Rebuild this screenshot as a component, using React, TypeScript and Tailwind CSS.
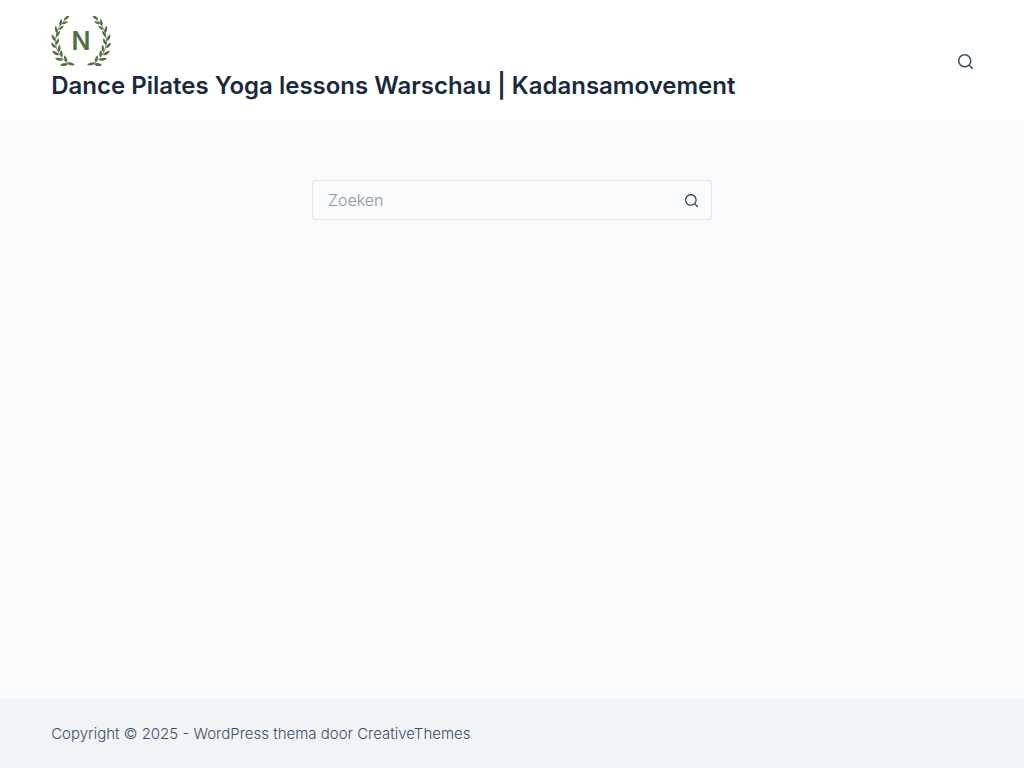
const LEAF = 'M0 0C1.400 -2 4.800 -2.500 8.200 -0.600C5.400 1.500 2 1.600 0 0Z'

// position on the stem, direction in degrees, scale
const LEAVES = [
    { x: 13, y: 4, r: -36, s: 0.9 },
    { x: 11, y: 8, r: -20, s: 0.8 },
    { x: 9, y: 10, r: -74, s: 0.9 },
    { x: 8, y: 14, r: -38, s: 0.8 },
    { x: 6, y: 17, r: -98, s: 0.9 },
    { x: 5, y: 21, r: -52, s: 0.9 },
    { x: 4, y: 25, r: -112, s: 0.9 },
    { x: 5, y: 29, r: -62, s: 0.9 },
    { x: 5, y: 32, r: -130, s: 0.9 },
    { x: 8, y: 36, r: -82, s: 0.9 },
    { x: 8, y: 39, r: -146, s: 1 },
    { x: 11, y: 41, r: -94, s: 0.9 },
    { x: 12, y: 44, r: -164, s: 1 },
    { x: 16, y: 46, r: -108, s: 0.9 },
    { x: 17, y: 48, r: -184, s: 1 },
    { x: 16, y: 47, r: 18, s: 1 },
]

function Branch() {
    return (
        <>
            <path
                d="M15 3C8 9 5 17 4.500 25C4.500 34 10 43 18 48"
                fill="none"
                stroke="currentColor"
                strokeWidth="0.8"
            />
            {LEAVES.map(({ x, y, r, s }) => (
                <path key={`${x}-${y}`} d={LEAF} transform={`translate(${x} ${y}) rotate(${r}) scale(${s})`} />
            ))}
        </>
    )
}

function Logo() {
    return (
        <svg viewBox="0 0 60 50" className="h-[50px] w-[60px] text-[#4f6f43]" fill="currentColor" aria-hidden="true">
            <Branch />
            <g transform="translate(60 0) scale(-1 1)">
                <Branch />
            </g>
            <text x="30" y="34" textAnchor="middle" className="text-[25px] font-semibold">
                N
            </text>
        </svg>
    )
}

function SearchIcon({ className }: { className: string }) {
    return (
        <svg viewBox="0 0 15 15" className={className} fill="currentColor" aria-hidden="true">
            <path d="M14.8 13.700L12 11c.9-1.200 1.500-2.600 1.500-4.200 0-3.700-3-6.800-6.800-6.800S0 3 0 6.800s3 6.800 6.800 6.800c1.600 0 3.100-.6 4.200-1.500l2.800 2.800c.1.1.3.2.5.2s.4-.1.5-.2c.3-.4.3-.9 0-1.200zM1.500 6.800c0-2.900 2.400-5.200 5.200-5.200S12 3.900 12 6.800 9.600 12 6.800 12 1.500 9.600 1.500 6.800z" />
        </svg>
    )
}

export default function App() {
    return (
        <div className="flex min-h-screen flex-col bg-[#fafbfd] font-['Inter',sans-serif] text-[#3a4f66]">
            <header className="bg-white">
                <div className="mx-auto flex w-[90%] items-center justify-between pt-4 pb-[14px]">
                    <div>
                        <a href="#" aria-label="Kadansamovement" className="inline-block align-top">
                            <Logo />
                        </a>
                        <h1 className="text-[24px] leading-[40px] font-semibold text-[#192a3d]">
                            <a href="#">Dance Pilates Yoga lessons Warschau | Kadansamovement</a>
                        </h1>
                    </div>
                    <button type="button" aria-label="Zoeken">
                        <SearchIcon className="size-[15px]" />
                    </button>
                </div>
            </header>

            <main className="flex-1 px-4 py-[60px]">
                <form
                    role="search"
                    className="mx-auto flex h-10 max-w-[400px] items-center rounded-[3px] border border-[#e0e5eb]"
                >
                    <input
                        type="search"
                        aria-label="Zoeken"
                        placeholder="Zoeken"
                        className="h-full min-w-0 flex-1 bg-transparent pl-[15px] text-base font-light outline-none placeholder:text-[#8895a3]"
                    />
                    <button
                        type="submit"
                        aria-label="Zoekknop"
                        className="flex h-full w-10 items-center justify-center"
                    >
                        <SearchIcon className="size-[13px]" />
                    </button>
                </form>
            </main>

            <footer className="bg-[#f0f4f7]">
                <div className="mx-auto w-[90%] py-[25px] text-[15px] leading-[19px] font-light">
                    Copyright © 2025 - WordPress thema door <a href="#">CreativeThemes</a>
                </div>
            </footer>
        </div>
    )
}
